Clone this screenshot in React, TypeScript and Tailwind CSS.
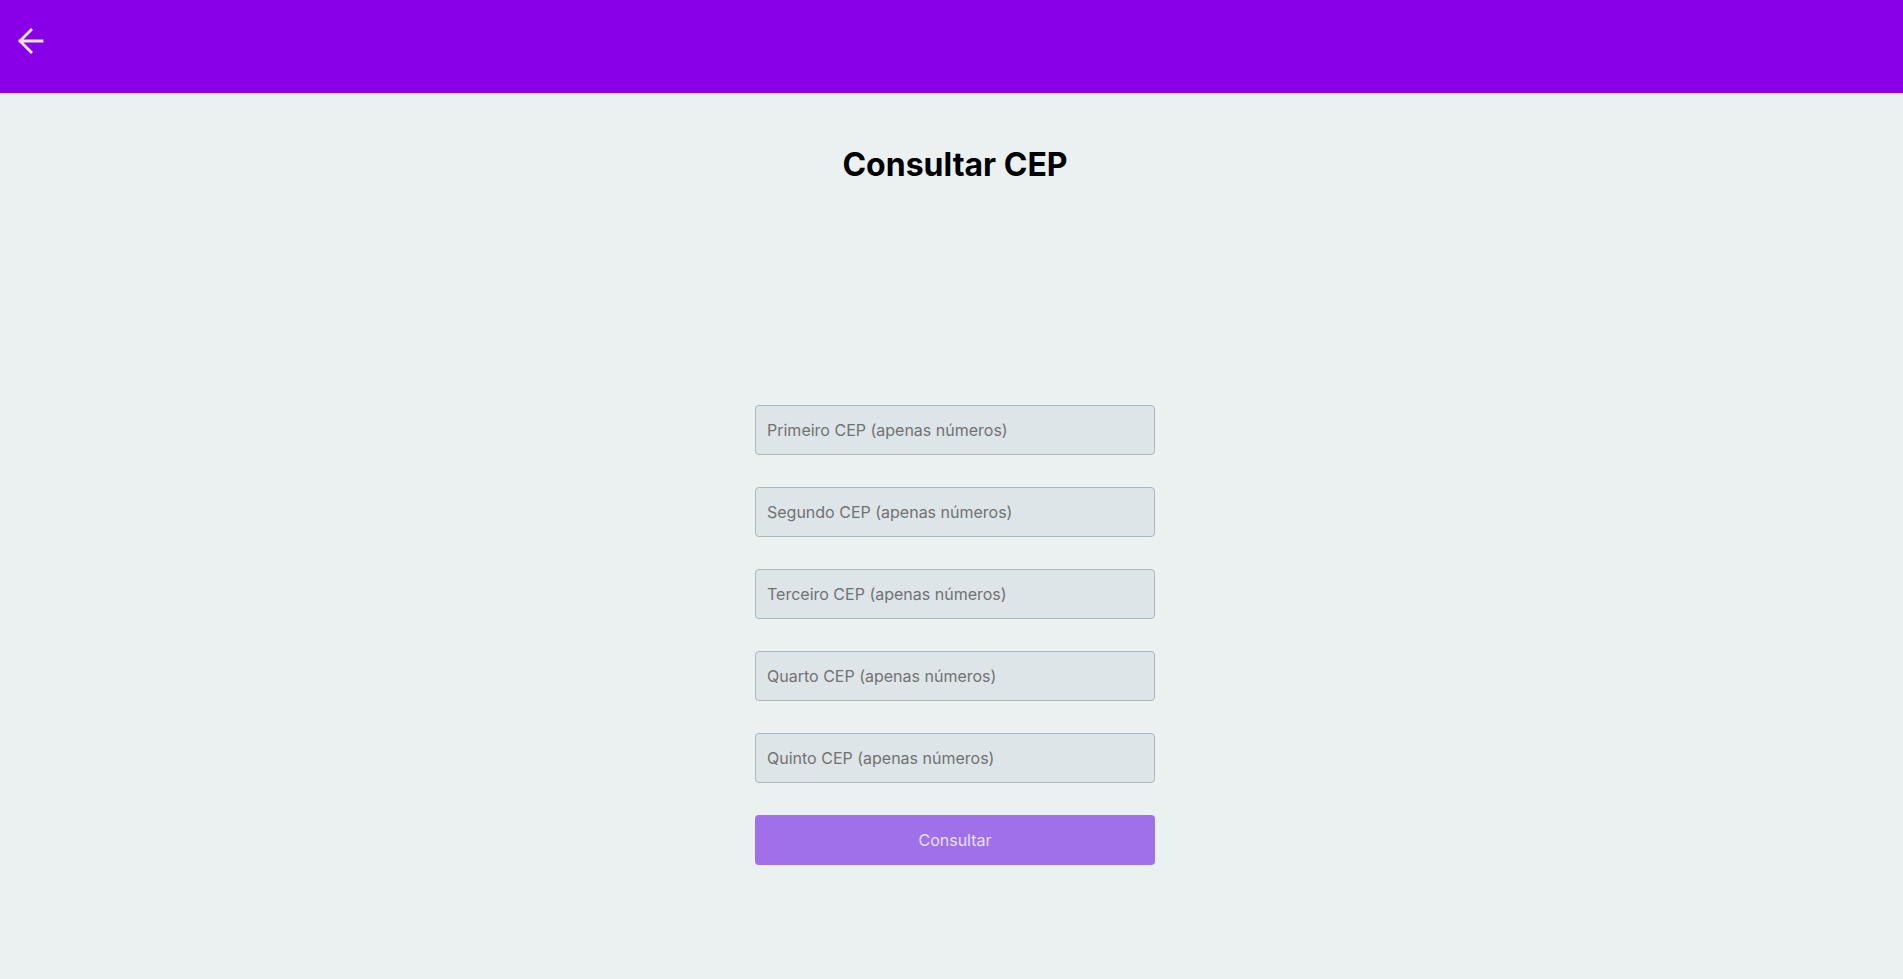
import React from "react";

const fields = [
  "Primeiro CEP (apenas números)",
  "Segundo CEP (apenas números)",
  "Terceiro CEP (apenas números)",
  "Quarto CEP (apenas números)",
  "Quinto CEP (apenas números)",
];

export default function App() {
  return (
    <div className="min-h-screen bg-[#ebf0f1] font-['Inter',sans-serif]">
      <header className="h-[93px] bg-[#8800e8] pl-[14px] pt-[24px]">
        <button className="block">
          <svg width="34" height="34" viewBox="0 0 34 34" fill="none">
            <path
              d="M28 17H6M17 6L6 17l11 11"
              stroke="#ece4f7"
              strokeWidth="2.8"
              strokeLinecap="square"
              strokeLinejoin="miter"
            />
          </svg>
        </button>
      </header>
      <main className="flex flex-col items-center pl-[7px]">
        <h1 className="mt-[54px] text-[32px] leading-[36px] font-bold text-black">
          Consultar CEP
        </h1>
        <form className="mt-[222px] flex w-[400px] flex-col gap-[32px]" onSubmit={(e) => e.preventDefault()}>
          {fields.map((f) => (
            <input
              key={f}
              type="text"
              placeholder={f}
              className="h-[50px] w-full rounded-[4px] border border-[#aab7bd] bg-[#dde5e8] px-[11px] text-[16px] text-[#333] placeholder:text-[#717272] outline-none"
            />
          ))}
          <button
            type="submit"
            className="h-[50px] w-full rounded-[4px] bg-[#a070ea] text-[16px] text-[#e6e2f5]"
          >
            Consultar
          </button>
        </form>
      </main>
    </div>
  );
}
